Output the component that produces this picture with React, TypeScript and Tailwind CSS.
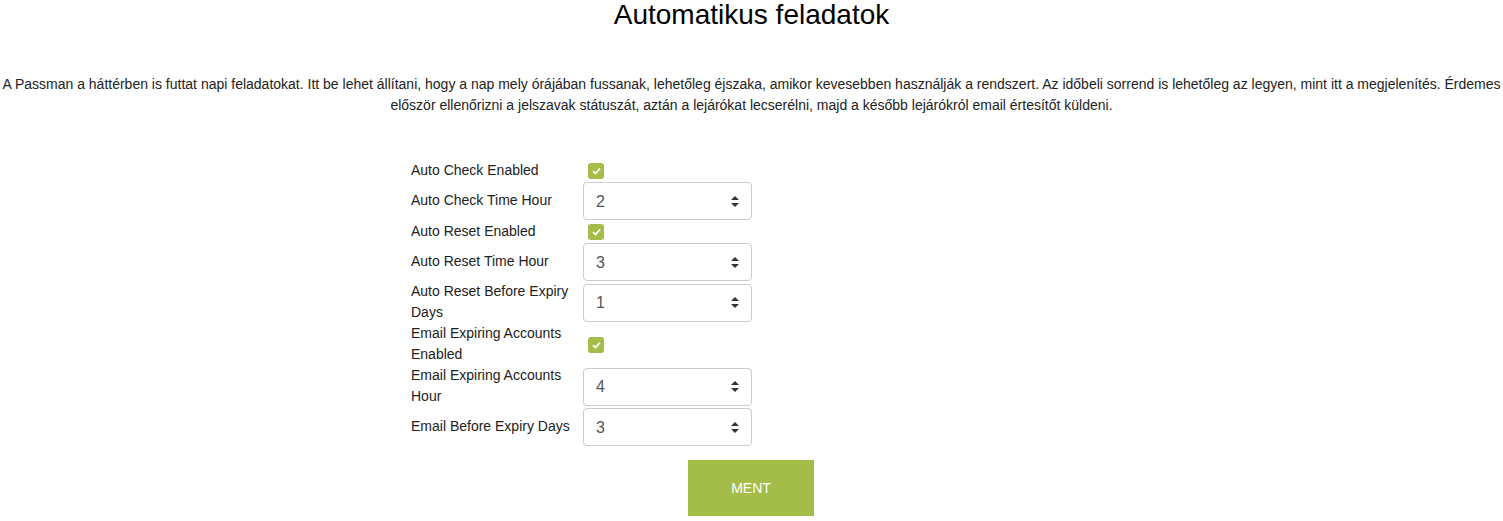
import React from 'react';

const rows: { label: string; kind: 'check' | 'select'; value?: string }[] = [
  { label: 'Auto Check Enabled', kind: 'check' },
  { label: 'Auto Check Time Hour', kind: 'select', value: '2' },
  { label: 'Auto Reset Enabled', kind: 'check' },
  { label: 'Auto Reset Time Hour', kind: 'select', value: '3' },
  { label: 'Auto Reset Before Expiry Days', kind: 'select', value: '1' },
  { label: 'Email Expiring Accounts Enabled', kind: 'check' },
  { label: 'Email Expiring Accounts Hour', kind: 'select', value: '4' },
  { label: 'Email Before Expiry Days', kind: 'select', value: '3' },
];

export default function App() {
  return (
    <div className="min-h-[521px] bg-white text-[#222] font-['Liberation_Sans',Arial,sans-serif] text-[14px] leading-[21px]">
      <h1 className="text-center text-[28px] leading-[30px] text-black">Automatikus feladatok</h1>
      <p className="text-center mt-[44px]">
        A Passman a háttérben is futtat napi feladatokat. Itt be lehet állítani, hogy a nap mely órájában fussanak, lehetőleg éjszaka, amikor kevesebben használják a rendszert. Az időbeli sorrend is lehetőleg az legyen, mint itt a megjelenítés. Érdemes először ellenőrizni a jelszavak státuszát, aztán a lejárókat lecserélni, majd a később lejárókról email értesítőt küldeni.
      </p>
      <div className="ml-[411px] mt-[43px] grid grid-cols-[172px_169px]">
        {rows.map((r) => (
          <React.Fragment key={r.label}>
            <div className="flex items-center pr-[8px] min-h-[22px]">{r.label}</div>
            <div className="flex items-center pt-[1px]">
              {r.kind === 'check' ? <Check /> : <Select value={r.value!} />}
            </div>
          </React.Fragment>
        ))}
      </div>
      <div className="flex justify-center mt-[14px]">
        <button className="w-[126px] h-[56px] -ml-[1px] bg-[#a3bd48] text-white text-[14px]">MENT</button>
      </div>
    </div>
  );
}

function Check() {
  return (
    <span className="ml-[5px] w-[16px] h-[16px] rounded-[3px] bg-[#a3bd48] flex items-center justify-center">
      <svg width="9" height="8" viewBox="0 0 9 8">
        <path d="M1 4.2 L3.5 6.5 L8 1.5" stroke="white" strokeWidth="1.8" fill="none" />
      </svg>
    </span>
  );
}

function Select({ value }: { value: string }) {
  return (
    <div className="w-[169px] h-[38px] border border-[#ccc] rounded-[4px] flex items-center justify-between pl-[12px] pr-[12px] text-[16px] text-[#555]">
      <span>{value}</span>
      <svg width="8" height="11" viewBox="0 0 8 11">
        <path d="M4 0 L8 4 L0 4 Z M0 7 L8 7 L4 11 Z" fill="#333" />
      </svg>
    </div>
  );
}
